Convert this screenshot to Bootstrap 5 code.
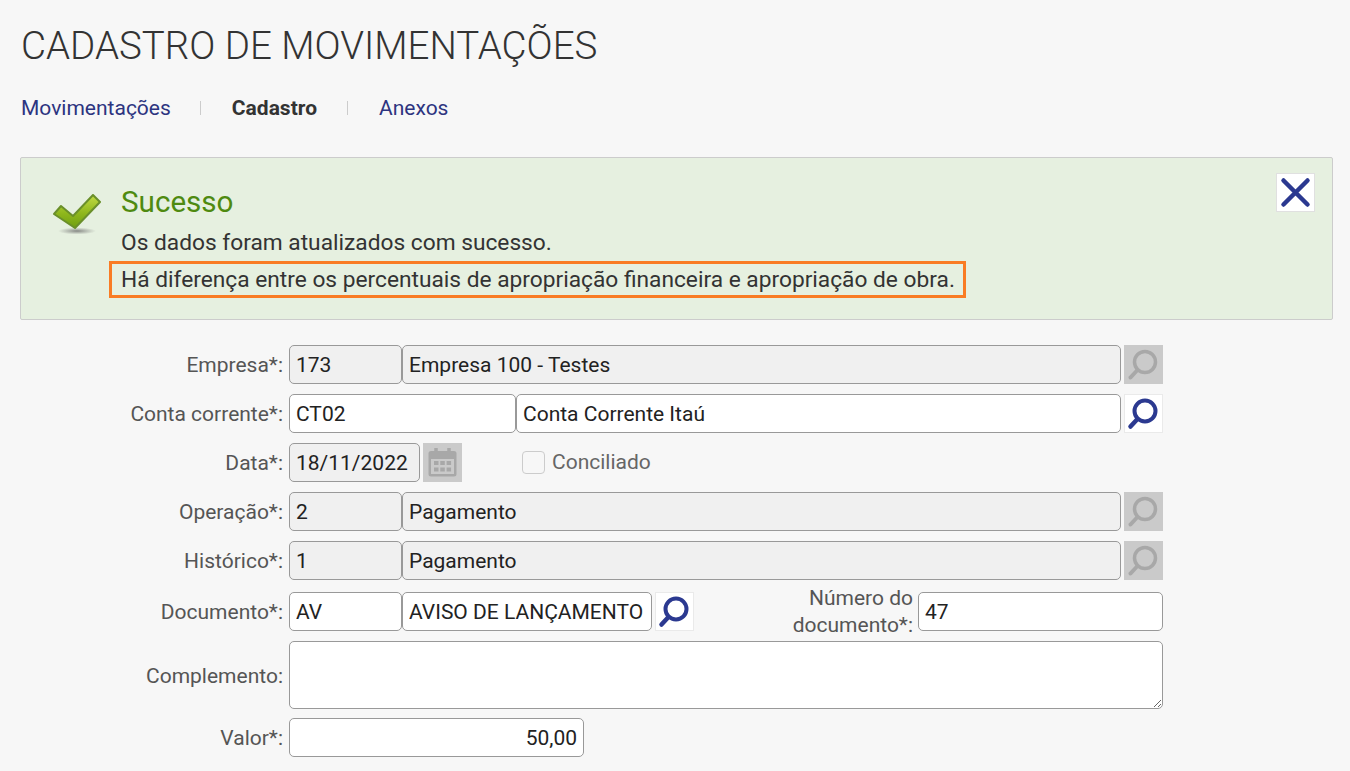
<!DOCTYPE html>
<html lang="pt-BR">
<head>
<meta charset="utf-8">
<title>Cadastro de Movimentações</title>
<link href="https://cdn.jsdelivr.net/npm/bootstrap@5.3.0/dist/css/bootstrap.min.css" rel="stylesheet">
<style>
html,body{height:771px;overflow:hidden}
body{background:#f7f7f7;font-family:Roboto,"Liberation Sans",sans-serif;font-size:21px;color:#3a3a3a}
.page-wrap{padding:0 17px 0 20px}
.page-title{font-family:Roboto,sans-serif;font-weight:300;font-size:38.5px;line-height:44px;margin:0;padding:24px 0 0 1px;color:#333;text-transform:uppercase}
.tab-nav{padding:16px 0 0 1px;height:63px;font-size:21px;line-height:24px;list-style:none;margin:0}
.tab-nav a{color:#2d3480;text-decoration:none}
.tab-nav b{font-weight:700;color:#333}
.tab-sep{width:1px;height:14px;background:#ccc;margin:0 31px 0 29px}
.tab-sep-b{margin:0 31px 0 30px}
.msg-box{height:163px;background:#e6f0e0;border:1px solid #ccc;border-radius:2px;margin-top:26px;margin-bottom:25px;padding:26px 0 0 100px;position:relative;font-size:22.72px}
.msg-title{font-size:29.6px;line-height:36px;color:#4f8a10;margin-bottom:5px}
.msg-line{line-height:36px;color:#333;height:36px}
.msg-hl{display:inline-block;border:3px solid #f97c24;margin-left:-12px;padding:1px 8px 0 9px;line-height:30px;height:37px;white-space:nowrap}
.msg-check{position:absolute;left:32px;top:36px}
.msg-close{position:absolute;right:17px;top:15px;width:39px;height:39px;background:#fff;border:1px solid #e0e0e0}
.form-area{width:1143px}
.frow{display:flex;align-items:center;height:39px;margin-bottom:10px}
.flabel{width:269px;text-align:right;padding:3px 6px 0 0;color:#555;flex:none;white-space:nowrap}
.fbox{height:39px;border:1px solid #999;border-radius:5px;background:#fff;color:#222;padding:0 6px;line-height:37px;font-size:21px;flex:none;font-family:Roboto,sans-serif;outline:0;box-shadow:none}
.fbox[readonly]{background:#f0f0f0}
.w113{width:113px}.w227{width:227px}.w605{width:605px}.w719{width:719px}.w131{width:131px}.w250{width:250px}.w245{width:245px}.w295{width:295px}
.icon-btn{width:39px;height:39px;background:#fff;border:1px solid #eaeaea;flex:none;margin-left:3px;padding:0;display:flex;align-items:center;justify-content:center}
.icon-off{background:#cacaca;border-color:#cacaca}
.doc-label{width:201px;text-align:right;padding-right:5px;line-height:27px;color:#555;flex:none;margin-left:23px}
.conc{margin-left:60px;display:flex;align-items:center;gap:7px;color:#666}
.conc-box{width:23px;height:23px;border:1px solid #ccc;border-radius:4px;background:#f7f7f7;display:block}
textarea.fbox{height:68px;width:874px;resize:both;display:block}
.tall{height:68px;margin-bottom:9px}
.row-doc-gap{margin-bottom:12px}
</style>
</head>
<body>
<div class="page-wrap">
  <h1 class="page-title">Cadastro de Movimentações</h1>
  <ul class="tab-nav d-flex align-items-center">
    <li><a href="#">Movimentações</a></li>
    <li class="tab-sep"></li>
    <li><b>Cadastro</b></li>
    <li class="tab-sep tab-sep-b"></li>
    <li><a href="#">Anexos</a></li>
  </ul>
  <div class="msg-box">
    <svg class="msg-check" width="50" height="44" viewBox="0 0 50 44">
      <defs>
        <linearGradient id="g" x1="0" y1="0" x2="0" y2="1"><stop offset="0" stop-color="#c2db45"/><stop offset=".55" stop-color="#8fb71c"/><stop offset="1" stop-color="#6f9f12"/></linearGradient>
        <radialGradient id="s"><stop offset="0" stop-color="#666" stop-opacity=".75"/><stop offset="1" stop-color="#777" stop-opacity="0"/></radialGradient>
      </defs>
      <ellipse cx="24" cy="37" rx="19" ry="3.5" fill="url(#s)"/>
      <path d="M1 20 L8 12 L20 22 L40 1 L47 8 L22 34 Z" fill="url(#g)" stroke="#6a8f2a" stroke-width="2" stroke-linejoin="round"/>
    </svg>
    <div class="msg-title">Sucesso</div>
    <div class="msg-line">Os dados foram atualizados com sucesso.</div>
    <div class="msg-line"><span class="msg-hl">Há diferença entre os percentuais de apropriação financeira e apropriação de obra.</span></div>
    <div class="msg-close">
      <svg width="37" height="37" viewBox="0 0 37 37" class="d-block"><path d="M6.5 6.5 L30.5 30.5 M30.5 6.5 L6.5 30.5" stroke="#2b3990" stroke-width="4.5" stroke-linecap="round"/></svg>
    </div>
  </div>
  <div class="form-area">
    <div class="frow"><div class="flabel">Empresa*:</div><input class="fbox w113" readonly value="173"><input class="fbox w719" readonly value="Empresa 100 - Testes"><div class="icon-btn icon-off"><svg width="37" height="37" viewBox="0 0 37 37"><circle cx="20" cy="16" r="10.5" fill="none" stroke="#a8a8a8" stroke-width="3.5"/><path d="M12.5 24 L5.5 31.5" stroke="#a8a8a8" stroke-width="4" stroke-linecap="round"/></svg></div></div>
    <div class="frow"><div class="flabel">Conta corrente*:</div><input class="fbox w227" value="CT02"><input class="fbox w605" value="Conta Corrente Itaú"><div class="icon-btn"><svg width="37" height="37" viewBox="0 0 37 37"><circle cx="20" cy="16" r="10.5" fill="none" stroke="#2b3990" stroke-width="4"/><path d="M12.5 24 L5.5 31.5" stroke="#2b3990" stroke-width="4.5" stroke-linecap="round"/></svg></div></div>
    <div class="frow"><div class="flabel">Data*:</div><input class="fbox w131" readonly value="18/11/2022"><div class="icon-btn icon-off"><svg width="33" height="33" viewBox="0 0 33 33"><path d="M5 5 H28 a2.5 2.5 0 0 1 2.5 2.5 V28 a2.5 2.5 0 0 1 -2.5 2.5 H5 a2.5 2.5 0 0 1 -2.5 -2.5 V7.5 A2.5 2.5 0 0 1 5 5 Z M5 13 V28 H28 V13 Z" fill="#a8a8a8" fill-rule="evenodd"/><path d="M10 2 V7 M23 2 V7" stroke="#a8a8a8" stroke-width="3.5"/><path d="M8 15 h4.5 v4 h-4.5z M14.3 15 h4.5 v4 h-4.5z M20.6 15 h4.5 v4 h-4.5z M8 21.5 h4.5 v4 h-4.5z M14.3 21.5 h4.5 v4 h-4.5z M20.6 21.5 h4.5 v4 h-4.5z" fill="#a8a8a8"/></svg></div><label class="conc"><span class="conc-box"></span>Conciliado</label></div>
    <div class="frow"><div class="flabel">Operação*:</div><input class="fbox w113" readonly value="2"><input class="fbox w719" readonly value="Pagamento"><div class="icon-btn icon-off"><svg width="37" height="37" viewBox="0 0 37 37"><circle cx="20" cy="16" r="10.5" fill="none" stroke="#a8a8a8" stroke-width="3.5"/><path d="M12.5 24 L5.5 31.5" stroke="#a8a8a8" stroke-width="4" stroke-linecap="round"/></svg></div></div>
    <div class="frow row-doc-gap"><div class="flabel">Histórico*:</div><input class="fbox w113" readonly value="1"><input class="fbox w719" readonly value="Pagamento"><div class="icon-btn icon-off"><svg width="37" height="37" viewBox="0 0 37 37"><circle cx="20" cy="16" r="10.5" fill="none" stroke="#a8a8a8" stroke-width="3.5"/><path d="M12.5 24 L5.5 31.5" stroke="#a8a8a8" stroke-width="4" stroke-linecap="round"/></svg></div></div>
    <div class="frow"><div class="flabel">Documento*:</div><input class="fbox w113" value="AV"><input class="fbox w250" value="AVISO DE LANÇAMENTO"><div class="icon-btn"><svg width="37" height="37" viewBox="0 0 37 37"><circle cx="20" cy="16" r="10.5" fill="none" stroke="#2b3990" stroke-width="4"/><path d="M12.5 24 L5.5 31.5" stroke="#2b3990" stroke-width="4.5" stroke-linecap="round"/></svg></div><div class="doc-label">Número do documento*:</div><input class="fbox w245" value="47"></div>
    <div class="frow tall"><div class="flabel">Complemento:</div><textarea class="fbox"></textarea></div>
    <div class="frow"><div class="flabel">Valor*:</div><input class="fbox text-end w295" value="50,00"></div>
  </div>
</div>
<script src="https://cdn.jsdelivr.net/npm/bootstrap@5.3.0/dist/js/bootstrap.bundle.min.js"></script>
</body>
</html>
